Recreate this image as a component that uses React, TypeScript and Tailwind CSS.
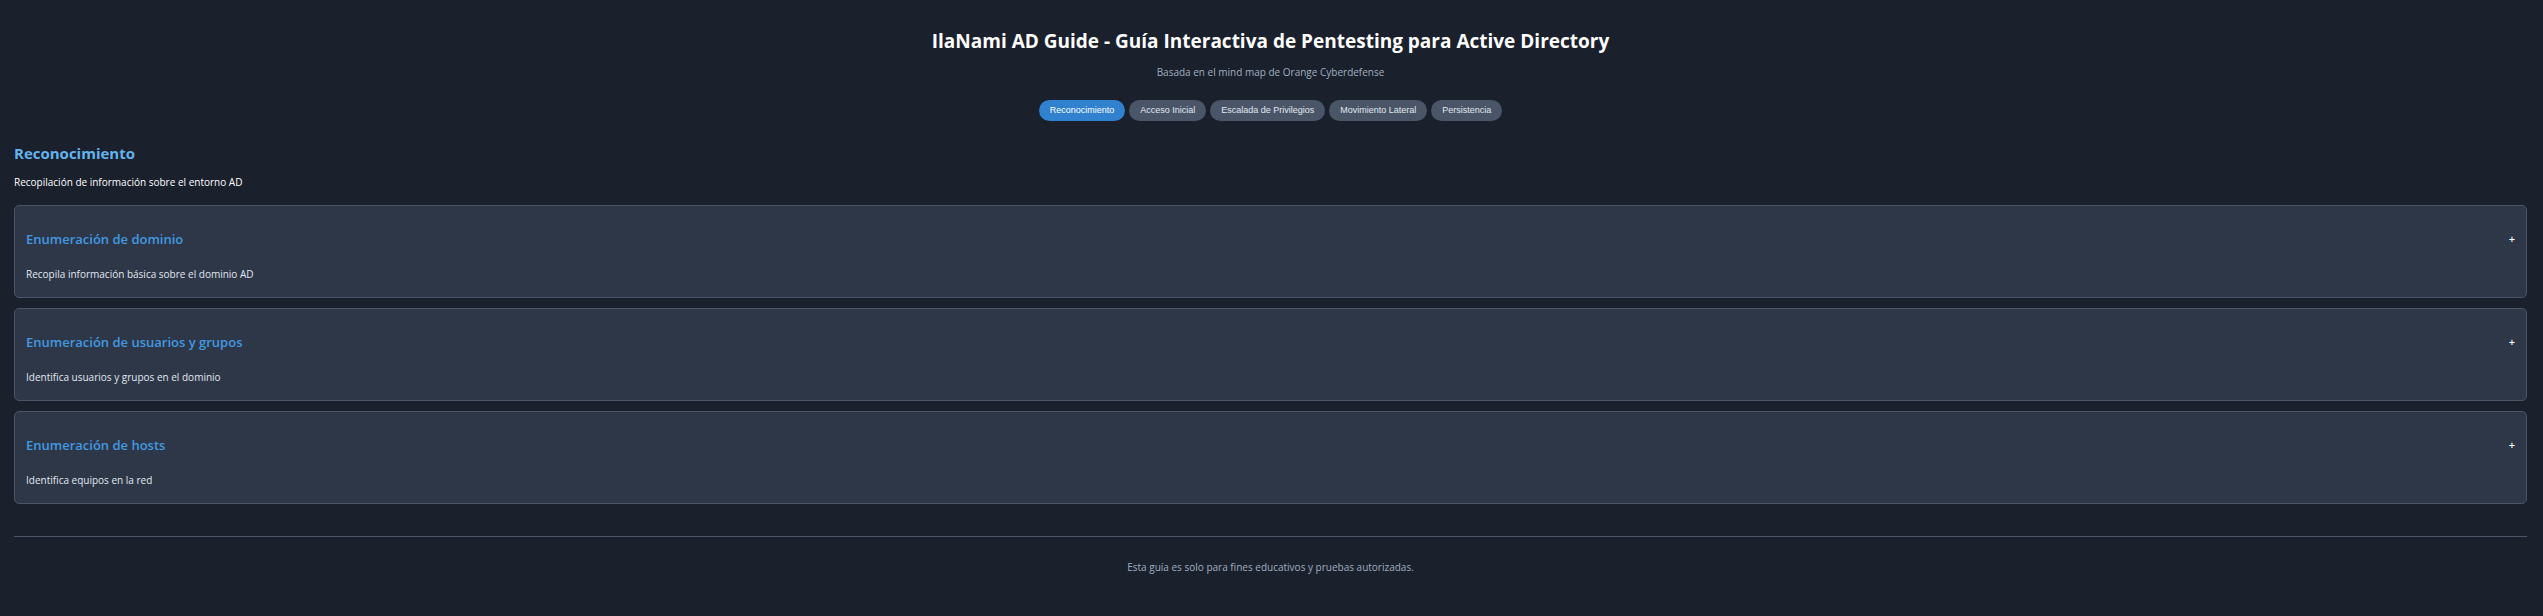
import { useState } from "react";

const phases = [
  "Reconocimiento",
  "Acceso Inicial",
  "Escalada de Privilegios",
  "Movimiento Lateral",
  "Persistencia",
];

const techniques = [
  { title: "Enumeración de dominio", text: "Recopila información básica sobre el dominio AD" },
  { title: "Enumeración de usuarios y grupos", text: "Identifica usuarios y grupos en el dominio" },
  { title: "Enumeración de hosts", text: "Identifica equipos en la red" },
];

export default function App() {
  const [active, setActive] = useState(phases[0]);

  return (
    <div className="min-h-screen bg-[#1a202c] pt-[27px] pr-4 pb-9 pl-3.5 font-['Open_Sans','Noto_Sans',sans-serif] text-[10px] leading-4 text-[#e2e8f0]">
      <header className="flex flex-col items-center text-center">
        <h1 className="text-[19px] leading-7 font-bold text-white">
          IlaNami AD Guide - Guía Interactiva de Pentesting para Active Directory
        </h1>
        <p className="mt-[9px] text-[#a0aec0]">Basada en el mind map de Orange Cyberdefense</p>
        <nav className="mt-5 flex flex-wrap justify-center gap-1">
          {phases.map((phase) => (
            <button
              key={phase}
              type="button"
              onClick={() => setActive(phase)}
              className={
                "cursor-pointer rounded-full px-[11px] py-[5px] font-['Liberation_Sans',sans-serif] text-[9px] leading-[11px] " +
                (phase === active ? "bg-[#3182ce] text-white" : "bg-[#4a5568] text-[#e2e8f0]")
              }
            >
              {phase}
            </button>
          ))}
        </nav>
      </header>

      <main className="mt-5">
        <h2 className="text-[15px] leading-6 font-bold text-[#63b3ed]">{active}</h2>
        <p className="mt-[9px] text-white">Recopilación de información sobre el entorno AD</p>
        <div className="mt-[15px] flex flex-col gap-2.5">
          {techniques.map((item) => (
            <article
              key={item.title}
              className="rounded-[5px] border border-[#4a5568] bg-[#2d3748] px-[11px] pt-[23px] pb-[15px]"
            >
              <div className="flex items-center justify-between">
                <h3 className="text-[13px] leading-5 font-semibold text-[#4299e1]">{item.title}</h3>
                <button
                  type="button"
                  aria-label={"Mostrar " + item.title}
                  className="cursor-pointer text-[11px] font-semibold text-white"
                >
                  +
                </button>
              </div>
              <p className="mt-[17px]">{item.text}</p>
            </article>
          ))}
        </div>
      </main>

      <footer className="mt-8 border-t border-[#4a5568] pt-[22px] text-center text-[#a0aec0]">
        Esta guía es solo para fines educativos y pruebas autorizadas.
      </footer>
    </div>
  );
}
